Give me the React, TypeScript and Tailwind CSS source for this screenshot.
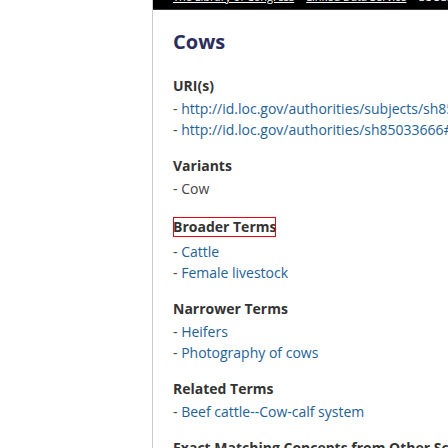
const sections: { title: string; items: string[]; links: boolean; boxed?: boolean }[] = [
  {
    title: 'URI(s)',
    items: [
      'http://id.loc.gov/authorities/subjects/sh85033666',
      'http://id.loc.gov/authorities/sh85033666#concept',
    ],
    links: true,
  },
  { title: 'Variants', items: ['Cow'], links: false },
  { title: 'Broader Terms', items: ['Cattle', 'Female livestock'], links: true, boxed: true },
  { title: 'Narrower Terms', items: ['Heifers', 'Photography of cows'], links: true },
  { title: 'Related Terms', items: ['Beef cattle--Cow-calf system'], links: true },
  { title: 'Exact Matching Concepts from Other Schemes', items: [], links: true },
]

export default function App() {
  return (
    <div className="w-[448px] h-[448px] overflow-hidden bg-white" style={{ fontFamily: '"Open Sans", sans-serif' }}>
      <div className="ml-[152px] min-h-[448px] border-l border-[#cccccc]">
        <div className="h-[10px] overflow-hidden bg-black border-b border-[#333333]">
          <div className="mt-[-11px] pl-[20px] whitespace-nowrap text-[11px] leading-[15px] text-white">
            <span className="underline">The Library of Congress</span>
            {' > '}
            <span className="underline">Linked Data Service</span>
            {' > '}
            <span>LC Subject Headings (LCSH)</span>
          </div>
        </div>

        <main className="pl-[20px] whitespace-nowrap">
          <h1 className="mt-[18px] text-[20px] leading-[28px] font-bold text-[#2b2e5e]">Cows</h1>

          <div className="mt-[19px] flex flex-col gap-[15px]">
            {sections.map((s) => (
              <section key={s.title}>
                <h3
                  className={
                    s.boxed
                      ? 'inline-block text-[14px] leading-[20px] font-bold text-[#333333] outline-1 outline-offset-[-1px] outline-[#e8000b]'
                      : 'text-[14px] leading-[21px] font-bold text-[#333333]'
                  }
                >
                  {s.title}
                </h3>
                <ul className={s.boxed ? 'mt-[3px]' : 'mt-[2px]'}>
                  {s.items.map((item) => (
                    <li key={item} className="text-[14px] leading-[21px] text-[#444444]">
                      -{' '}
                      <span className={s.links ? 'text-[#1e6296]' : 'text-[#444444]'}>{item}</span>
                    </li>
                  ))}
                </ul>
              </section>
            ))}
          </div>
        </main>
      </div>
    </div>
  )
}
